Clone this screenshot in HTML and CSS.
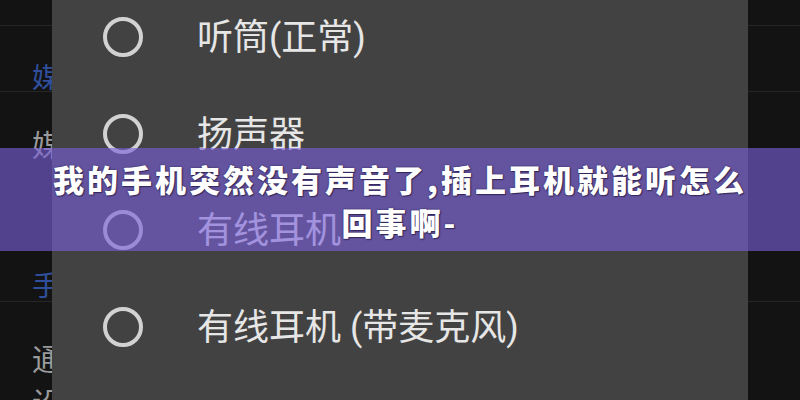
FILE: index.html
```html
<!DOCTYPE html>
<html lang="zh-CN">
<head>
  <meta charset="UTF-8">
  <meta name="viewport" content="width=device-width, initial-scale=1.0">
  <title>我的手机突然没有声音了,插上耳机就能听怎么回事啊-</title>
  <link rel="stylesheet" href="styles.css">
</head>
<body>
<div class="screen">
  <!-- settings list behind the dialog -->
  <aside class="side side-left">
    <div class="side-row short"></div>
    <div class="side-row header"><span class="accent">媒体</span></div>
    <div class="side-row item"><span>媒体音量</span></div>
    <div class="side-row header second"><span class="accent">手机</span></div>
    <div class="side-row item two-line"><span>通话音量</span><span>设置</span></div>
  </aside>

  <main class="dialog">
    <ul class="options">
      <li class="option"><span class="radio"></span><span class="label">听筒(正常)</span></li>
      <li class="option"><span class="radio"></span><span class="label">扬声器</span></li>
      <li class="option"><span class="radio"></span><span class="label">有线耳机</span></li>
      <li class="option"><span class="radio"></span><span class="label">有线耳机 (带麦克风)</span></li>
      <li class="option"><span class="radio"></span><span class="label">蓝牙</span></li>
    </ul>
  </main>

  <aside class="side side-right">
    <div class="side-row short"></div>
    <div class="side-row header"></div>
    <div class="side-row header tall-right"></div>
    <div class="side-row item"></div>
  </aside>

  <div class="title-band">
    <h1>我的手机突然没有声音了,插上耳机就能听怎么<br>回事啊-</h1>
  </div>
</div>
</body>
</html>
```

FILE: styles.css
```css
body {
    margin: 0;
    padding: 0;
    background-color: #131313;
    font-family: Roboto, "Noto Sans CJK SC", sans-serif;
}

.screen {
    position: relative;
    width: 800px;
    height: 400px;
    overflow: hidden;
    display: flex;
}

/* side strips */
.side {
    width: 52px;
    flex-shrink: 0;
    background-color: #131313;
    overflow: hidden;
    display: flex;
    flex-direction: column;
}

.side-row {
    flex-shrink: 0;
    border-bottom: 1px solid #262626;
    box-sizing: border-box;
    padding-left: 32px;
    white-space: nowrap;
    color: #9a9a9a;
    font-family: "Noto Sans CJK SC", sans-serif;
    font-size: 28px;
    line-height: 36px;
}

.side-row.short {
    height: 26px;
}

.side-row.header {
    height: 66px;
    padding-top: 32px;
}

.side-row.header.second {
    height: 60px;
    padding-top: 24px;
}

.side-row.header.tall-right {
    height: 210px;
}

.side-row.item {
    height: 150px;
    border-bottom: none;
    padding-top: 33px;
    font-size: 30px;
}

.side-row.two-line {
    display: flex;
    flex-direction: column;
    height: auto;
    padding-top: 33px;
    line-height: 44px;
}

.accent {
    color: #2f4f9c;
}

/* dialog */
.dialog {
    flex: 1;
    background-color: #424242;
    padding-left: 51px;
}

.options {
    list-style: none;
    margin: -11px 0 0;
    padding: 0;
}

.option {
    height: 96.5px;
    display: flex;
    align-items: center;
    gap: 54px;
}

.radio {
    width: 32px;
    height: 32px;
    border: 4px solid #d2d2d2;
    border-radius: 50%;
    flex-shrink: 0;
}

.label {
    color: #e6e6e6;
    font-size: 36px;
    line-height: 1;
    padding-top: 2px;
}

/* title band over the screenshot */
.title-band {
    position: absolute;
    left: 0;
    top: 148px;
    width: 800px;
    height: 103px;
    background-color: rgba(121, 95, 218, 0.62);
    display: flex;
    align-items: center;
    justify-content: center;
}

.title-band h1 {
    margin: 0;
    color: #fff;
    font-family: "Noto Sans CJK SC", sans-serif;
    font-weight: 900;
    font-size: 31px;
    line-height: 43px;
    letter-spacing: 3px;
    text-align: center;
    text-shadow: 0 0 2px rgba(30, 20, 60, 0.8), 1px 1px 1px rgba(30, 20, 60, 0.6);
}
```
